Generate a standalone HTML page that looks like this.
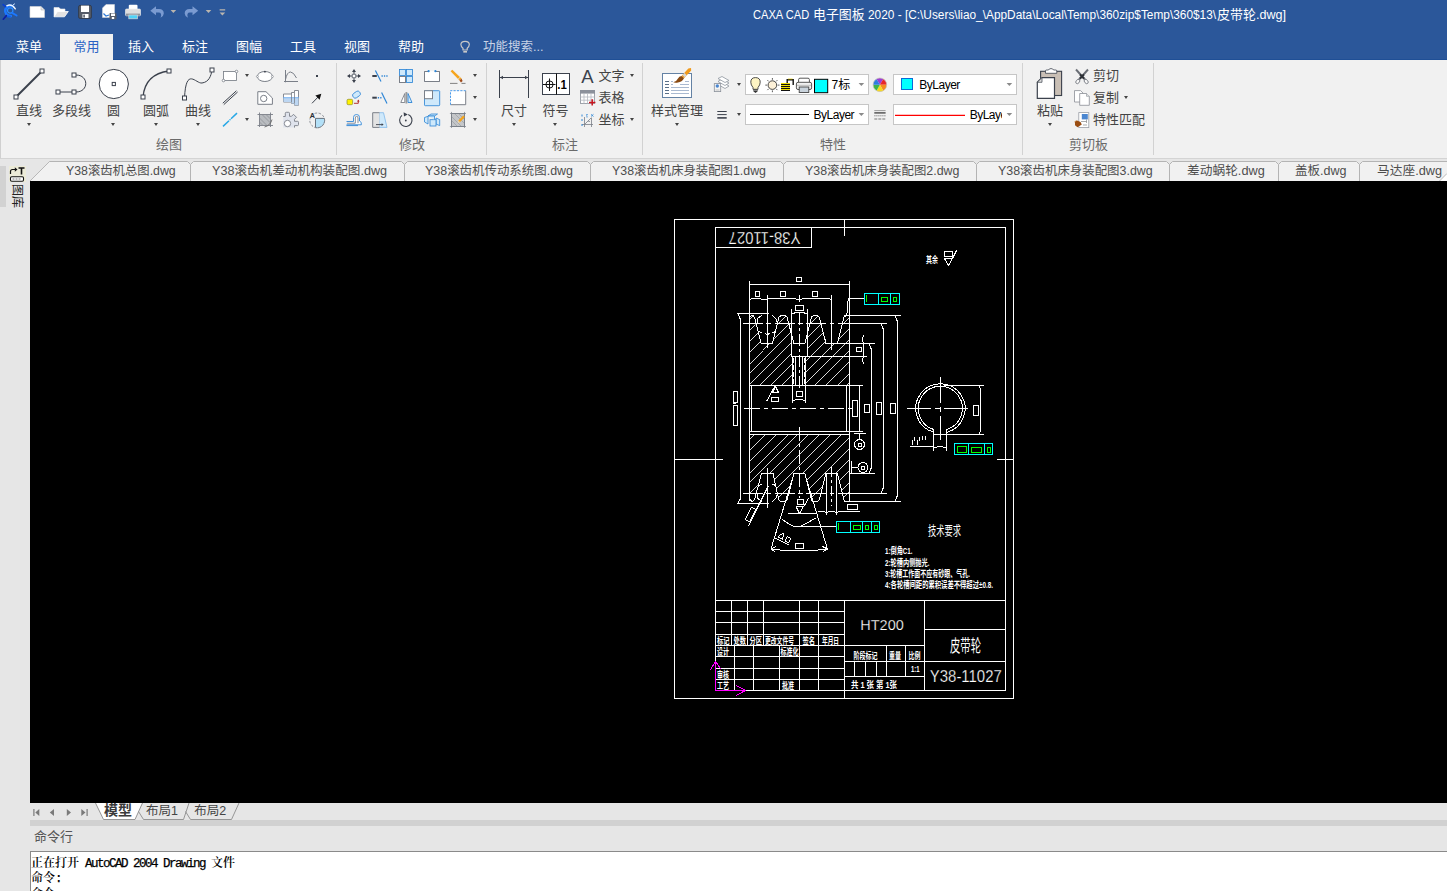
<!DOCTYPE html><html lang="zh"><head><meta charset="utf-8"><title>CAXA CAD</title><style>
*{margin:0;padding:0;box-sizing:border-box}
html,body{width:1447px;height:891px;overflow:hidden;background:#e6e6e6}
body{font-family:"Liberation Sans","Noto Sans CJK SC",sans-serif;font-size:13px;color:#444;position:relative}
.abs{position:absolute}
.fit{position:absolute;display:inline-block;white-space:nowrap;transform-origin:0 50%}
#title{left:0;top:0;width:1447px;height:60px;background:#2b579a;border-bottom:1px solid #1f4f96}
.mt{position:absolute;top:34px;height:26px;line-height:25px;color:#fff;font-size:13px;text-align:center;white-space:nowrap}
.mt.act{background:#f1f1f1;color:#2b63c4}
#ribbon{left:0;top:60px;width:1447px;height:99px;background:#f1f1f1;border-bottom:1px solid #d4d4d4;border-left:1px solid #d0d0d0}
.lbl{position:absolute;font-size:13px;line-height:14px;color:#444;white-space:nowrap;transform:translateX(-50%)}
.glbl{position:absolute;top:138px;font-size:13px;line-height:14px;color:#6a6a6a;white-space:nowrap;transform:translateX(-50%)}
.sep{position:absolute;top:63px;width:1px;height:92px;background:#d2d2d2}
.dd{position:absolute;width:0;height:0;border-left:2.5px solid transparent;border-right:2.5px solid transparent;border-top:3px solid #444;margin-left:0.5px}
.combo{position:absolute;height:21px;background:#fff;border:1px solid #c6c6c6}
.stxt{position:absolute;font-size:13px;line-height:14px;color:#444;white-space:nowrap}
.ctxt{position:absolute;font-size:12px;line-height:14px;color:#000;white-space:nowrap}
#canvas{left:30px;top:181px;width:1417px;height:622px;background:#000}
.dtab{position:absolute;top:164px;font-size:12px;line-height:14px;color:#444;white-space:nowrap}
#cmdlabel{left:34px;top:830px;font-size:13px;line-height:14px;color:#555}
#cmdbox{left:30px;top:851px;width:1417px;height:40px;background:#fff;border-top:1px solid #8a8a8a;border-left:1px solid #8a8a8a}
.cmdt{position:absolute;left:0px;font-family:"Liberation Serif","Noto Serif CJK SC",serif;font-size:12px;line-height:13px;color:#000;white-space:pre;font-weight:600}
.mono{font-family:"Liberation Mono",monospace;font-size:12.5px;letter-spacing:-1.5px;font-weight:normal;-webkit-text-stroke:0.25px #000}
.btab{position:absolute;top:804px;font-size:12.5px;line-height:14px;color:#444;white-space:nowrap}
svg{position:absolute;overflow:visible}
</style></head><body>
<div id="title" class="abs"></div>
<span id="tt1" class="fit" style="left:752.7px;transform:scaleX(0.9261);top:7px;color:#fff;font-size:12px;line-height:16px">CAXA CAD</span>
<span id="tt2" class="fit" style="left:813.3px;transform:scaleX(0.9939);top:6.5px;color:#fff;font-size:13px;line-height:16px">电子图板</span>
<span id="tt3" class="fit" style="left:867.9px;transform:scaleX(0.9883);top:7px;color:#fff;font-size:12px;line-height:16px">2020 - [C:\Users\liao_\AppData\Local\Temp\360zip$Temp\360$13\</span>
<span id="tt4" class="fit" style="left:1216.6px;transform:scaleX(0.9996);top:6.5px;color:#fff;font-size:13px;line-height:16px">皮带轮</span>
<span id="tt5" class="fit" style="left:1256px;transform:scaleX(1.0492);top:7px;color:#fff;font-size:12px;line-height:16px">.dwg]</span>
<div class="mt" style="left:2px;width:54px">菜单</div>
<div class="mt act" style="left:60px;width:53px">常用</div>
<div class="mt" style="left:114px;width:54px">插入</div>
<div class="mt" style="left:168px;width:54px">标注</div>
<div class="mt" style="left:222px;width:54px">图幅</div>
<div class="mt" style="left:276px;width:54px">工具</div>
<div class="mt" style="left:330px;width:54px">视图</div>
<div class="mt" style="left:384px;width:54px">帮助</div>
<div class="abs" style="left:483px;top:39px;color:#c8d3e6;font-size:12.5px;line-height:16px;white-space:nowrap">功能搜索...</div>
<div id="ribbon" class="abs"></div>
<div class="sep" style="left:336px"></div>
<div class="sep" style="left:486px"></div>
<div class="sep" style="left:642px"></div>
<div class="sep" style="left:1022px"></div>
<div class="sep" style="left:1153px"></div>
<div class="glbl" style="left:169px">绘图</div>
<div class="glbl" style="left:412px">修改</div>
<div class="glbl" style="left:565px">标注</div>
<div class="glbl" style="left:833px">特性</div>
<div class="glbl" style="left:1088.5px">剪切板</div>
<div class="lbl" style="left:29px;top:103.6px">直线</div>
<div class="lbl" style="left:71.5px;top:103.6px">多段线</div>
<div class="lbl" style="left:113.5px;top:103.6px">圆</div>
<div class="lbl" style="left:156px;top:103.6px">圆弧</div>
<div class="lbl" style="left:198px;top:103.6px">曲线</div>
<div class="lbl" style="left:514px;top:103.6px">尺寸</div>
<div class="lbl" style="left:555.5px;top:103.6px">符号</div>
<div class="lbl" style="left:677px;top:103.6px">样式管理</div>
<div class="lbl" style="left:1050px;top:103.6px">粘贴</div>
<div class="dd" style="left:26px;top:123px"></div>
<div class="dd" style="left:110.5px;top:123px"></div>
<div class="dd" style="left:153px;top:123px"></div>
<div class="dd" style="left:195px;top:123px"></div>
<div class="dd" style="left:511px;top:123px"></div>
<div class="dd" style="left:552.5px;top:123px"></div>
<div class="dd" style="left:674px;top:123px"></div>
<div class="dd" style="left:1047px;top:123px"></div>
<div class="dd" style="left:244.3px;top:73.8px"></div>
<div class="dd" style="left:244.3px;top:117.7px"></div>
<div class="dd" style="left:472.5px;top:73.5px"></div>
<div class="dd" style="left:472.5px;top:95.5px"></div>
<div class="dd" style="left:472.5px;top:117.8px"></div>
<div class="dd" style="left:629.5px;top:73.8px"></div>
<div class="dd" style="left:629.5px;top:117.5px"></div>
<div class="dd" style="left:736.5px;top:82.7px"></div>
<div class="dd" style="left:736.5px;top:112.7px"></div>
<div class="dd" style="left:1123.4px;top:95.7px"></div>
<div class="combo" style="left:745px;top:74px;width:124px"></div>
<div class="combo" style="left:893px;top:74px;width:124px"></div>
<div class="combo" style="left:745px;top:104px;width:124px"></div>
<div class="combo" style="left:893px;top:104px;width:124px"></div>
<div class="ctxt" style="left:831.5px;top:78px;font-size:12px">7标</div>
<div class="ctxt" style="left:919.3px;top:78px;letter-spacing:-0.5px">ByLayer</div>
<div class="ctxt" style="left:813.6px;top:108px;letter-spacing:-0.5px">ByLayer</div>
<div class="ctxt" style="left:969.7px;top:108px;letter-spacing:-0.5px;width:32.5px;overflow:hidden">ByLayer</div>
<div class="stxt" style="left:598.5px;top:68.5px">文字</div>
<div class="stxt" style="left:598.5px;top:90.5px">表格</div>
<div class="stxt" style="left:598.5px;top:112.5px">坐标</div>
<div class="stxt" style="left:1093px;top:68.5px">剪切</div>
<div class="stxt" style="left:1093px;top:90.5px">复制</div>
<div class="stxt" style="left:1093px;top:112.5px">特性匹配</div>
<svg width="1447" height="160" viewBox="0 0 1447 160" style="left:0;top:0"><g fill="none" stroke-linecap="round"><path d="M12.8 6.3 A5.2 5.2 0 1 0 10.8 16.1" stroke="#1c78ff" stroke-width="2.6"/><circle cx="10.2" cy="10.5" r="2.7" stroke="#2b8cff" stroke-width="1.2"/><path d="M6.8 5.8 Q11.5 3.2 15.3 8.8" stroke="#ffffff" stroke-width="1.4" opacity="0.92"/><path d="M13.2 4.8 L14.6 3.9" stroke="#dcecff" stroke-width="0.9"/><path d="M12.2 12.9 L16.6 15.5" stroke="#1c78ff" stroke-width="1.9"/><path d="M3.3 19.2 L6.4 15.6" stroke="#0a1fa8" stroke-width="1.7"/><path d="M3.1 4.6 L5.6 6.6" stroke="#0a3fd0" stroke-width="1.6"/><ellipse cx="8.9" cy="16.4" rx="2.1" ry="1" fill="#0d5fe8" stroke="none"/></g>
<path d="M30 6.5 H41 L44.5 10 V17.5 H30 Z" fill="#fff" stroke="#d8d8d8" stroke-width="0.6"/><path d="M41 6.5 V10 H44.5" fill="#e4e4e4" stroke="#bbb" stroke-width="0.6"/>
<path d="M54 16.5 V7.5 H59 L60.5 9 H65 V11.5" fill="#fff" stroke="#e8e8e8" stroke-width="0.6"/><path d="M54 16.8 L57.5 11.5 H68.3 L64.5 16.8 Z" fill="#e2e2e2" stroke="#fff" stroke-width="0.8"/>
<rect x="78.6" y="5.4" width="12.8" height="13" rx="1.5" fill="#555c69" stroke="#2f3541" stroke-width="0.8"/><rect x="81" y="5.6" width="8" height="6.4" fill="#fff"/><rect x="82.5" y="14" width="6" height="4" fill="#fff"/><rect x="83.3" y="14.6" width="1.6" height="3" fill="#555c69"/>
<path d="M102.5 8 L106 4.5 H114.5 V17.5 H102.5 Z" fill="#fff" stroke="#ddd" stroke-width="0.5"/><path d="M103.5 13.5 L106 16 L109 15" stroke="#2f7ad6" stroke-width="1.2" fill="none"/><rect x="109.5" y="13" width="7" height="6.5" rx="0.8" fill="#555c69"/><rect x="111" y="13.5" width="4" height="2.5" fill="#fff"/><rect x="111.8" y="17" width="2.4" height="2" fill="#fff"/>
<path d="M128.8 9.5 V5.8 Q128.8 4.8 129.8 4.8 H136.5 Q137.5 4.8 137.5 5.8 V9.5 Z" fill="#fff"/><rect x="125.5" y="9" width="15" height="6.8" rx="1" fill="#dfdfdf" stroke="#f4f4f4" stroke-width="0.6"/><rect x="126" y="13.6" width="14" height="2.2" fill="#8d949e"/><rect x="128.8" y="15" width="8.6" height="3.8" fill="#4fd2f7" stroke="#d8d8d8" stroke-width="0.7"/>
<path d="M150.3 10.8 L156 6.3 V9 H159 Q163.8 9 163.8 13.5 Q163.8 16 160.5 17.8 Q161.5 15.8 161 14 Q160.5 12.6 158.5 12.6 H156 V15.3 Z" fill="#7b9bd1"/>
<path d="M198.2 10.8 L192.5 6.3 V9 H189.5 Q184.7 9 184.7 13.5 Q184.7 16 188 17.8 Q187 15.8 187.5 14 Q188 12.6 190 12.6 H192.5 V15.3 Z" fill="#7b9bd1"/>
<path d="M170.6 10 H176.20000000000002 L173.4 13 Z" fill="#bab5ae"/>
<path d="M205.7 10 H211.3 L208.5 13 Z" fill="#bab5ae"/>
<path d="M219.6 9.3 H225.2 V10.5 H219.6 Z M219.6 12.5 H225.2 L222.4 15.5 Z" fill="#bab5ae"/>
<g fill="none" stroke="#c9c9c9" stroke-width="1.2"><path d="M463 48.3 Q460.9 46.6 460.9 44.6 Q460.9 41.3 465.1 41.3 Q469.3 41.3 469.3 44.6 Q469.3 46.6 467.2 48.3 V50 H463 Z"/><path d="M463.3 51.8 H467" stroke-width="1.6"/></g>
<line x1="16" y1="97" x2="42" y2="71" stroke="#3b414c" stroke-width="2"/>
<rect x="14.0" y="95.0" width="4" height="4" fill="#fff" stroke="#3b414c" stroke-width="1"/>
<rect x="40.0" y="69.0" width="4" height="4" fill="#fff" stroke="#3b414c" stroke-width="1"/>
<path d="M58 92 H74 M76 75 C89 75 89 92 76 92" fill="none" stroke="#3b414c" stroke-width="1"/>
<rect x="56.0" y="90.0" width="4" height="4" fill="#fff" stroke="#3b414c" stroke-width="1"/>
<rect x="72.0" y="90.0" width="4" height="4" fill="#fff" stroke="#3b414c" stroke-width="1"/>
<rect x="72.0" y="73.0" width="4" height="4" fill="#fff" stroke="#3b414c" stroke-width="1"/>
<circle cx="113.8" cy="84" r="14.6" fill="#fff" stroke="#3b414c" stroke-width="1"/>
<rect x="112.2" y="82.4" width="3.2" height="3.2" fill="#fff" stroke="#3b414c" stroke-width="1"/>
<path d="M143 97 Q145 74 169 71" fill="none" stroke="#3b414c" stroke-width="1.3"/>
<rect x="141.0" y="95.0" width="4" height="4" fill="#fff" stroke="#3b414c" stroke-width="1"/>
<rect x="167.0" y="69.0" width="4" height="4" fill="#fff" stroke="#3b414c" stroke-width="1"/>
<path d="M184.5 98 C186 66 196 84 202 83 C209 82 211 76 212 70" fill="none" stroke="#3b414c" stroke-width="1"/>
<rect x="182.5" y="96.0" width="4" height="4" fill="#fff" stroke="#3b414c" stroke-width="1"/>
<rect x="210.0" y="68.0" width="4" height="4" fill="#fff" stroke="#3b414c" stroke-width="1"/>
<rect x="223.5" y="71.5" width="13" height="9" fill="#fff" stroke="#7a7f88" stroke-width="0.85"/><circle cx="236.5" cy="71.5" r="1.3" fill="#fff" stroke="#7a7f88" stroke-width="0.8"/><circle cx="223.5" cy="80.5" r="1.3" fill="#fff" stroke="#7a7f88" stroke-width="0.8"/>
<ellipse cx="264.9" cy="76.5" rx="7.6" ry="5" fill="#fff" stroke="#7a7f88" stroke-width="1"/><circle cx="264.9" cy="71.7" r="0.9" fill="#3b414c"/><circle cx="257.4" cy="76.5" r="1" fill="#fff" stroke="#7a7f88" stroke-width="0.6"/><circle cx="272.4" cy="76.5" r="1" fill="#fff" stroke="#7a7f88" stroke-width="0.6"/>
<path d="M285.5 70 V82.3 M284 81.5 H298 M285.5 79.5 Q287 72 290.5 72 Q293.5 72 296.5 78" fill="none" stroke="#7a7f88" stroke-width="1"/>
<rect x="316" y="75" width="2" height="2" fill="#3b414c"/>
<path d="M222.8 103.2 L236.4 90.8 M223.8 104.6 L237.6 92" stroke="#3b414c" stroke-width="1"/>
<path d="M257.8 91.7 H266 L272.4 98 V104.3 H257.8 Z" fill="#fff" stroke="#7a7f88" stroke-width="1"/><circle cx="263.7" cy="98.5" r="3.2" fill="#fff" stroke="#7a7f88" stroke-width="1"/>
<path d="M283.5 94 H291.5 V92.5 H294.5 V90.5 H298.5 V105.3 H294.5 V103.5 H291.5 V102 H283.5 Z" fill="#fff" stroke="#7a7f88" stroke-width="0.9"/><path d="M283.5 98 H298.5 V105.3 H294.5 V103.5 H291.5 V102 H283.5 Z" fill="#bcd6f2" stroke="none"/><path d="M283 97.7 H299" stroke="#6aaaf0" stroke-width="0.9"/><path d="M291.5 94 V102 M294.5 92.5 V103.5" stroke="#7a7f88" stroke-width="0.8"/>
<path d="M312 103.3 L318.5 96.6" stroke="#3b414c" stroke-width="1"/><path d="M321.3 93.8 L319.6 99.8 L315.4 95.6 Z" fill="#111"/>
<path d="M223 126.4 L229 120.7 M231 118.8 L237 113.1" stroke="#29a8e6" stroke-width="1.5"/><circle cx="230" cy="119.7" r="0.8" fill="#29a8e6"/>
<rect x="259.5" y="114.5" width="11" height="11" fill="#b9bcc0"/><path d="M259.5 112.5 V127 M270.5 112.5 V127 M257.5 114.5 H273 M257.5 125.5 H273" stroke="#7a7f88" stroke-width="0.9"/><path d="M259.5 118 L267 125.5 M259.5 122 L263 125.5 M262 114.5 L270.5 123 M266 114.5 L270.5 119" stroke="#8a8d92" stroke-width="0.7"/><path d="M264.5 127 Q270.5 125.5 272 119.5" fill="none" stroke="#666" stroke-width="0.9"/>
<path d="M283.2 116.5 H285.3 V113.3 Q285.3 112.3 286.3 112.3 H288.5 Q289.5 112.3 289.5 113.3 V116.3 H291.5 L293.5 114.3 L296.5 117.3 L294.5 119.3 V121.3 H297.5 Q298.5 121.3 298.5 122.3 V124.6 Q298.5 125.6 297.5 125.6 H294.5 V127.6 H283.2 Z" fill="#dfe3ec"/><path d="M283.2 116.5 H285.3 V113.3 Q285.3 112.3 286.3 112.3 H288.5 Q289.5 112.3 289.5 113.3 V116.3 H291.5 L293.5 114.3 L296.5 117.3 L294.5 119.3 V121.3 H297.5 Q298.5 121.3 298.5 122.3 V124.6 Q298.5 125.6 297.5 125.6 H294.5 V127.6" fill="none" stroke="#7a7f88" stroke-width="0.9"/><circle cx="287.5" cy="123.5" r="3.2" fill="#fff" stroke="#7a7f88" stroke-width="0.9"/>
<path d="M315.5 118.4 H324.4 A7.5 7.5 0 0 1 315.5 127.7 Z" fill="#b3e0f7" stroke="none"/><path d="M315.5 127.5 V118.4 H324.3" fill="none" stroke="#5a6470" stroke-width="0.9"/><circle cx="317.2" cy="120.4" r="7.4" fill="none" stroke="#7a7f88" stroke-width="0.8" stroke-dasharray="2.6 1.4"/><path d="M324.35 118.4 A7.4 7.4 0 0 1 315.5 127.6" fill="none" stroke="#7a7f88" stroke-width="0.8"/><text x="309.8" y="117.9" font-size="7.2" font-weight="bold" fill="#2c313a" font-family='"Liberation Sans",sans-serif'>A</text>
<g fill="#3b414c" stroke="none"><path d="M354 69 L356 72 H352 Z M354 83 L356 80 H352 Z M347 76 L350 74 V78 Z M361 76 L358 74 V78 Z"/><rect x="353.5" y="71" width="1" height="10"/><rect x="349" y="75.5" width="10" height="1"/></g>
<rect x="352.3" y="74.3" width="3.4" height="3.4" fill="#fff" stroke="#7a7f88" stroke-width="1"/>
<path d="M372.3 76 H376.8" stroke="#3b414c" stroke-width="2"/><path d="M375.4 70.6 L381 81.6" stroke="#2f86d6" stroke-width="1.2"/><path d="M381.5 76 H388" stroke="#2f86d6" stroke-width="1.4" stroke-dasharray="1.3 1.1"/>
<rect x="399.5" y="69.5" width="6" height="6" fill="#cfe9fb" stroke="#2f86d6" stroke-width="0.85"/><rect x="406.5" y="69.5" width="6" height="6" fill="#cfe9fb" stroke="#2f86d6" stroke-width="0.85"/><rect x="406.5" y="76.5" width="6" height="6" fill="#cfe9fb" stroke="#2f86d6" stroke-width="0.85"/><rect x="399.5" y="76.5" width="6" height="6" fill="#fff" stroke="#7a7f88" stroke-width="1"/>
<path d="M428.5 71.5 H424.5 V81.5 H439.5 V71.5 H435.5" fill="#fff" stroke="#7a7f88" stroke-width="1"/><rect x="424.5" y="71.5" width="15" height="10" fill="#fff" stroke="none"/><path d="M428.5 71.5 H424.5 V81.5 H439.5 V71.5 H435.5" fill="none" stroke="#7a7f88" stroke-width="1"/><circle cx="428.6" cy="71.2" r="1.1" fill="#2f86d6"/><circle cx="435.4" cy="71.2" r="1.1" fill="#2f86d6"/>
<path d="M450.6 71.3 L452.3 69.7 L461.5 78.6 L459.5 80.6 Z" fill="#f6a51c"/><path d="M459.5 80.6 L461.5 78.6 L462.6 81 L461 82.4 Z" fill="#a04a1a"/><path d="M458 79.2 L460.2 77.2" stroke="#d8d8d8" stroke-width="1"/><path d="M450 83.4 H457.5 M461.5 83.4 H465.5" stroke="#666" stroke-width="0.8"/>
<rect x="347" y="99.3" width="5.6" height="5.4" rx="1.2" fill="#fff200" stroke="#8a8a30" stroke-width="0.7"/><rect x="352.5" y="92" width="8" height="5.2" rx="2.2" fill="#cfe9fb" stroke="#2f86d6" stroke-width="0.8" transform="rotate(-35 356.5 94.6)"/><path d="M354 103.3 H358.3 V101" fill="none" stroke="#b02020" stroke-width="0.9"/><path d="M358.3 99.6 L359.6 101.4 H357 Z" fill="#b02020"/>
<path d="M372.3 97.7 H376.8" stroke="#3b414c" stroke-width="2"/><path d="M377.8 97.7 H382.5" stroke="#2f86d6" stroke-width="1.4" stroke-dasharray="1.3 1.1"/><path d="M381.6 92.6 L387 103.4" stroke="#2f86d6" stroke-width="1.2"/>
<path d="M404.8 93.5 V102.5 H400.8 Z" fill="#fff" stroke="#7a7f88" stroke-width="0.9"/><rect x="405.5" y="92" width="1.8" height="11.5" fill="#9a9a9a"/><path d="M408 93.5 V102.5 H412 Z" fill="#cfe9fb" stroke="#2f86d6" stroke-width="0.9"/>
<rect x="424.5" y="90.7" width="15.2" height="15" rx="0.8" fill="#cfe9fb" stroke="#2f86d6" stroke-width="0.85"/><rect x="424.5" y="90.7" width="8" height="8" fill="#fff" stroke="#7a7f88" stroke-width="1"/>
<rect x="450.5" y="90.7" width="15.2" height="14" fill="#fff"/><path d="M465.7 90.7 V104.7 H450.5" fill="none" stroke="#7a7f88" stroke-width="1"/><path d="M450.5 104.7 V90.7 H465.7" fill="none" stroke="#4a9bea" stroke-width="1" stroke-dasharray="2.2 1.2"/>
<path d="M346.5 121.5 H353.5 V117.5 Q353.5 114.5 356.5 114.5 Q359.5 114.5 359.5 117.5 V121 Q362 122 361.3 124.8 H346.5" fill="#fff" stroke="#2f86d6" stroke-width="0.9"/><path d="M346.8 123.2 H355.3 V118 Q355.3 116.3 356.7 116.3 Q358 116.3 358 118 V123.2" fill="none" stroke="#7a7f88" stroke-width="0.9"/><path d="M346.5 125.6 H358" stroke="#2f86d6" stroke-width="0.9"/>
<path d="M379.5 112.7 H383.5 L387 127.4 H379.5 Z" fill="#cfe9fb" stroke="#7db8ea" stroke-width="0.8"/><path d="M379.5 112.7 H372.7 V127.4 H379.5" fill="#e3e3e3" stroke="#7a7f88" stroke-width="1"/><path d="M376 124.6 H382" stroke="#3b414c" stroke-width="0.9"/><path d="M383.6 124.6 L381.6 123.3 V125.9 Z" fill="#3b414c"/>
<path d="M408.3 114.6 A6.2 6.2 0 1 1 402 115.4" fill="none" stroke="#3b414c" stroke-width="1.1"/><path d="M407.8 114.6 L403.6 112.3 L404 116.6 Z" fill="#3b414c"/><circle cx="405.8" cy="120.5" r="0.9" fill="#3b414c"/>
<g fill="#cfe9fb" stroke="#2f86d6" stroke-width="0.8"><path d="M428 116 L431 114 H437.5 L434.5 116 Z"/><path d="M424.5 117.5 L428 116.3 V124 L424.5 122 Z"/><path d="M436 118 L439.7 119.6 V125.6 L436 124 Z"/><rect x="430" y="119.7" width="6" height="6.3"/><path d="M428 116 H434.5 V119.7"/></g>
<rect x="451.5" y="113.5" width="13" height="13" fill="#c4c6c9" stroke="#7a7f88" stroke-width="0.9"/><path d="M451.5 111.9 V128 M464.5 111.9 V128 M449.9 113.5 H466 M449.9 126.5 H466" stroke="#7a7f88" stroke-width="0.7"/><path d="M452 117 L461 126 M452 121 L457 126 M455 114 L464 123 M459 114 L464 119" stroke="#9a9da1" stroke-width="0.7"/><path d="M464.9 117 L463.3 115.4 L458.3 120.6 L459.9 122.2 Z" fill="#f6a51c"/><path d="M458.3 120.6 L457.6 123 L459.9 122.2 Z" fill="#f3d9a8"/>
<path d="M499.5 70 V98 M528.5 70 V98 M500 77.5 H528" stroke="#3b414c" stroke-width="1" fill="none"/><path d="M500 77.5 L503 75.7 V79.3 Z M528 77.5 L525 75.7 V79.3 Z" fill="#3b414c"/>
<rect x="542.5" y="73.5" width="27" height="21" fill="#fff" stroke="#3b414c" stroke-width="1"/><path d="M556.5 73.5 V94.5 M543 84.5 H555.5 M549.5 78.5 V91" stroke="#111" stroke-width="1"/><circle cx="549.5" cy="84.5" r="3.6" fill="none" stroke="#111" stroke-width="1"/><text x="557.3" y="89.3" font-size="12" font-weight="bold" fill="#000" font-family='"Liberation Sans",sans-serif' textLength="9.5" lengthAdjust="spacingAndGlyphs">.1</text>
<text x="581.3" y="82.7" font-size="18.5" fill="#3b414c" font-family='"Liberation Sans",sans-serif'>A</text>
<rect x="580.5" y="90.5" width="14" height="13" fill="#fff" stroke="#9ea3ab" stroke-width="1"/><rect x="580" y="90" width="15" height="3.6" fill="#8c919b"/><path d="M584 93.6 V103.5 M587.5 93.6 V103.5 M591 93.6 V103.5 M580.5 97 H594.5 M580.5 100.2 H594.5" stroke="#b5b9c0" stroke-width="0.8"/><rect x="586" y="97.5" width="10" height="8" fill="#f1f1f1" opacity="0"/><path d="M592.2 99.2 V105.6 M589 102.4 H595.4" stroke="#c8141e" stroke-width="1.5"/>
<path d="M584.5 117 V127 M582 124.5 H593 M584.5 124.5 L591.5 117.5 M588 121 L590 121.6 M591.5 118 V127" stroke="#7a7f88" stroke-width="0.8" fill="none"/><path d="M582 114.5 V116.5 M582 119 V121 M582 124 V126" stroke="#2f86d6" stroke-width="1"/><path d="M591 114.3 L593.5 116.5 M593.5 114.3 L591 116.5" stroke="#2f86d6" stroke-width="0.8"/><path d="M586 114.5 H588 M586 115.7 H587.3 M586 116.9 H588" stroke="#2f86d6" stroke-width="0.6"/>
<rect x="662.5" y="73.5" width="29" height="24" fill="#fff" stroke="#6482a4" stroke-width="1"/>
<path d="M665 81.5 H669" stroke="#5a6f88" stroke-width="1"/>
<path d="M671 81.5 H673 M685 81.5 H689" stroke="#a9b9d0" stroke-width="1"/>
<path d="M665 84.5 H669" stroke="#5a6f88" stroke-width="1"/>
<path d="M671 84.5 H673 M680 84.5 H689" stroke="#a9b9d0" stroke-width="1"/>
<path d="M665 87.5 H669" stroke="#5a6f88" stroke-width="1"/>
<path d="M671 87.5 H689" stroke="#a9b9d0" stroke-width="1"/>
<path d="M665 90.5 H669" stroke="#5a6f88" stroke-width="1"/>
<path d="M671 90.5 H689" stroke="#a9b9d0" stroke-width="1"/>
<path d="M665 93.5 H669" stroke="#5a6f88" stroke-width="1"/>
<path d="M671 93.5 H689" stroke="#a9b9d0" stroke-width="1"/>
<path d="M691 68 L688.3 68.4 L681.5 76 L684 78.3 L691.2 70.6 Z" fill="#f09a1c"/><path d="M684.5 73 L686.8 75.2 L684.8 77.3 L682.5 75.2 Z" fill="#d8d8d8"/><path d="M681.5 76 L684 78.3 Q682 82 678 82.5 Q675 83 673.3 82.3 Q677 81 678 78.5 Q679 76.2 681.5 76 Z" fill="#8a4a12"/>
<g fill="#fff" stroke="#8e959e" stroke-width="0.8"><path d="M718 84.5 L722 82 L729 86 L725 88.5 Z"/><path d="M718 81.5 L722 79 L729 83 L725 85.5 Z"/><path d="M718 78.5 L722 76.5 L729 80.5 L725 82.5 Z"/></g><rect x="714.3" y="83.6" width="6.4" height="8" fill="#f4f4f4" stroke="#8a9099" stroke-width="0.8"/><circle cx="717.3" cy="86" r="1.7" fill="#4a86d0"/><path d="M715.5 90 H719.5" stroke="#aaa" stroke-width="0.7"/>
<path d="M717.3 111.5 H726.7 M717.3 114.6 H726.7" stroke="#3b414c" stroke-width="1"/><path d="M717.3 117.9 H726.7" stroke="#3b414c" stroke-width="1.6"/>
<path d="M753 87.5 Q750.8 85 750.8 82.2 Q750.8 77.6 755.5 77.6 Q760.2 77.6 760.2 82.2 Q760.2 85 758 87.5 V89.3 H753 Z" fill="#fdf4c4" stroke="#3a3a3a" stroke-width="0.9"/><path d="M753.3 89.3 H757.7 V91.3 L755.5 93 L753.3 91.3 Z" fill="#333"/><path d="M753.3 90.3 H757.7" stroke="#ddd" stroke-width="0.6"/>
<circle cx="772.4" cy="85.1" r="4.3" fill="#fdf1d8" stroke="#333" stroke-width="0.9"/><path d="M772.4 78 V79.8 M772.4 90.4 V92.2 M765.3 85.1 H767.1 M777.7 85.1 H779.5 M767.4 80.1 L768.7 81.4 M776.1 88.8 L777.4 90.1 M767.4 90.1 L768.7 88.8 M776.1 81.4 L777.4 80.1" stroke="#333" stroke-width="0.8"/>
<g shape-rendering="crispEdges"><rect x="781" y="83" width="9" height="8" fill="#f0dc00"/><path d="M781 84.5 H790 M781 86.5 H790 M781 88.5 H790 M781 90.5 H790" stroke="#111" stroke-width="1"/></g><path d="M787.2 83 V79.7 H793.2 V85" fill="none" stroke="#111" stroke-width="1.4"/><path d="M788 79 H792.5" stroke="#e8d000" stroke-width="0.7"/>
<path d="M798.6 82.5 V79.6 Q798.6 78.2 800 78.2 H808 Q809.4 78.2 809.4 79.6 V82.5" fill="#fff" stroke="#444" stroke-width="0.9"/><rect x="796.4" y="82.3" width="15.2" height="7.2" rx="1.6" fill="#f2f2f2" stroke="#444" stroke-width="0.9"/><rect x="799.2" y="87" width="9.6" height="5.5" fill="#c9d3dc" stroke="#444" stroke-width="0.9"/><path d="M797 85.3 H811" stroke="#999" stroke-width="0.6"/>
<rect x="814.5" y="79.3" width="13.2" height="13.4" fill="#00ffff" stroke="#000" stroke-width="1"/>
<path d="M879.9 84.8 L876.50 78.91 A6.8 6.8 0 0 1 883.30 78.91 Z" fill="#9b3fd6"/>
<path d="M879.9 84.8 L883.30 78.91 A6.8 6.8 0 0 1 886.70 84.80 Z" fill="#e8262a"/>
<path d="M879.9 84.8 L886.70 84.80 A6.8 6.8 0 0 1 883.30 90.69 Z" fill="#f58a1f"/>
<path d="M879.9 84.8 L883.30 90.69 A6.8 6.8 0 0 1 876.50 90.69 Z" fill="#f7d91f"/>
<path d="M879.9 84.8 L876.50 90.69 A6.8 6.8 0 0 1 873.10 84.80 Z" fill="#3db54a"/>
<path d="M879.9 84.8 L873.10 84.80 A6.8 6.8 0 0 1 876.50 78.91 Z" fill="#2f7de1"/>
<circle cx="879.9" cy="84.8" r="6.8" fill="none" stroke="#c8c2b8" stroke-width="0.7"/>
<path d="M874.3 110.6 H885.6" stroke="#888" stroke-width="0.8"/><path d="M874.3 112.9 H885.6" stroke="#555" stroke-width="1.5"/><path d="M874.3 115.8 H885.6" stroke="#777" stroke-width="1" stroke-dasharray="1.2 0.8"/><path d="M874.3 119 H885.6" stroke="#777" stroke-width="1" stroke-dasharray="3 1"/>
<rect x="901.5" y="78.5" width="11" height="11" fill="#00ffff" stroke="#0a6ad8" stroke-width="1"/>
<path d="M750 114.5 H809" stroke="#000" stroke-width="1.2"/><path d="M895 115.4 H965" stroke="#ff0000" stroke-width="1.3"/>
<path d="M858.6 83.0 H864.1999999999999 L861.4 86.0 Z" fill="#8a8a8a"/>
<path d="M1006.6 83.0 H1012.1999999999999 L1009.4 86.0 Z" fill="#8a8a8a"/>
<path d="M858.6 113.0 H864.1999999999999 L861.4 116.0 Z" fill="#8a8a8a"/>
<path d="M1006.6 113.0 H1012.1999999999999 L1009.4 116.0 Z" fill="#8a8a8a"/>
<rect x="1040.6" y="71.3" width="21" height="24.2" fill="#c9bfb5" stroke="#3b414c" stroke-width="1.1"/><path d="M1045.5 73.3 V71 Q1045.5 70 1046.5 70 H1048.5 Q1049 68.6 1051 68.6 Q1053 68.6 1053.6 70 H1055.8 Q1056.8 70 1056.8 71 V73.3 Z" fill="#fff" stroke="#3b414c" stroke-width="0.8"/><path d="M1042 77.6 H1054.5 V98.3 H1037.3 V82.3 Z" fill="#fff" stroke="#3b414c" stroke-width="1.2"/><path d="M1042 77.6 V82.3 H1037.3 Z" fill="#dcdcdc" stroke="#3b414c" stroke-width="0.7"/>
<path d="M1076 69.5 L1086.3 81" stroke="#6a6e75" stroke-width="1.9"/><path d="M1088 69.5 L1077.7 81" stroke="#6a6e75" stroke-width="1.9"/><path d="M1080 74.5 L1084 78.5 M1084 74.5 L1080 78.5" stroke="#2c2f35" stroke-width="1.8"/><ellipse cx="1077.8" cy="81.5" rx="1.7" ry="2.4" fill="#f8f8f8" stroke="#7a7e85" stroke-width="0.9" transform="rotate(40 1077.8 81.5)"/><ellipse cx="1086.2" cy="81.5" rx="1.7" ry="2.4" fill="#f8f8f8" stroke="#7a7e85" stroke-width="0.9" transform="rotate(-40 1086.2 81.5)"/>
<path d="M1074.5 90.6 H1080.5 L1083 93 V102 H1074.5 Z" fill="#fff" stroke="#8a8e96" stroke-width="0.8"/><path d="M1079.7 93.5 H1086.5 L1089.3 96.3 V105.3 H1079.7 Z" fill="#fff" stroke="#8a8e96" stroke-width="0.8"/><path d="M1086.5 93.5 V96.3 H1089.3" fill="#e4e4e4" stroke="#8a8e96" stroke-width="0.6"/>
<rect x="1078.8" y="112.6" width="10" height="15" fill="#fff" stroke="#9a9ea6" stroke-width="0.8"/><rect x="1081.8" y="114" width="6" height="5.4" fill="#4a86d0"/><path d="M1081 121.5 H1086.5 M1086.5 119.5 V123 M1083 125 H1087" stroke="#888" stroke-width="0.7"/><path d="M1075 121.5 L1077 120.5 L1080.5 122 L1081.8 124.6 L1077.5 127.3 L1075 125.3 Z" fill="#9a4d12"/><path d="M1074.3 122 L1076.6 120.6" stroke="#c98a4a" stroke-width="0.8"/></svg>
<svg width="1447" height="30" viewBox="0 158 1447 30" style="left:0;top:158px"><path d="M30 181 L49.5 161.5 H1447 V181 Z" fill="#f1f1f1"/><path d="M30 181 L49.5 161.5 H185.5" fill="none" stroke="#b8b8b8" stroke-width="1"/><path d="M187.5 161 L190.5 164.5 L193.5 161 Z" fill="#e6e6e6" stroke="none"/><path d="M49.5 161.5 H187.5 L190.5 164.5 V181" fill="none" stroke="#b4b4b4" stroke-width="1"/><path d="M190.5 164.5 L193.5 161.5" fill="none" stroke="#b4b4b4" stroke-width="1"/><path d="M401.5 161 L404.5 164.5 L407.5 161 Z" fill="#e6e6e6" stroke="none"/><path d="M193.5 161.5 H401.5 L404.5 164.5 V181" fill="none" stroke="#b4b4b4" stroke-width="1"/><path d="M404.5 164.5 L407.5 161.5" fill="none" stroke="#b4b4b4" stroke-width="1"/><path d="M587.5 161 L590.5 164.5 L593.5 161 Z" fill="#e6e6e6" stroke="none"/><path d="M407.5 161.5 H587.5 L590.5 164.5 V181" fill="none" stroke="#b4b4b4" stroke-width="1"/><path d="M590.5 164.5 L593.5 161.5" fill="none" stroke="#b4b4b4" stroke-width="1"/><path d="M780.5 161 L783.5 164.5 L786.5 161 Z" fill="#e6e6e6" stroke="none"/><path d="M593.5 161.5 H780.5 L783.5 164.5 V181" fill="none" stroke="#b4b4b4" stroke-width="1"/><path d="M783.5 164.5 L786.5 161.5" fill="none" stroke="#b4b4b4" stroke-width="1"/><path d="M973.5 161 L976.5 164.5 L979.5 161 Z" fill="#e6e6e6" stroke="none"/><path d="M786.5 161.5 H973.5 L976.5 164.5 V181" fill="none" stroke="#b4b4b4" stroke-width="1"/><path d="M976.5 164.5 L979.5 161.5" fill="none" stroke="#b4b4b4" stroke-width="1"/><path d="M1166.5 161 L1169.5 164.5 L1172.5 161 Z" fill="#e6e6e6" stroke="none"/><path d="M979.5 161.5 H1166.5 L1169.5 164.5 V181" fill="none" stroke="#b4b4b4" stroke-width="1"/><path d="M1169.5 164.5 L1172.5 161.5" fill="none" stroke="#b4b4b4" stroke-width="1"/><path d="M1275.5 161 L1278.5 164.5 L1281.5 161 Z" fill="#e6e6e6" stroke="none"/><path d="M1172.5 161.5 H1275.5 L1278.5 164.5 V181" fill="none" stroke="#b4b4b4" stroke-width="1"/><path d="M1278.5 164.5 L1281.5 161.5" fill="none" stroke="#b4b4b4" stroke-width="1"/><path d="M1356.5 161 L1359.5 164.5 L1362.5 161 Z" fill="#e6e6e6" stroke="none"/><path d="M1281.5 161.5 H1356.5 L1359.5 164.5 V181" fill="none" stroke="#b4b4b4" stroke-width="1"/><path d="M1359.5 164.5 L1362.5 161.5" fill="none" stroke="#b4b4b4" stroke-width="1"/><path d="M1362.5 161.5 H1447" fill="none" stroke="#b4b4b4" stroke-width="1"/><path d="M1439.5 181 L1447 173.5 V181 Z" fill="#fff"/><path d="M1439.5 181 L1447 173.5" stroke="#aaa" stroke-width="0.8" fill="none"/></svg>
<span id="dt0" class="fit" style="left:66.3px;transform:scaleX(0.9869);top:163.5px;font-size:12.5px;line-height:14px;color:#4d4d4d">Y38滚齿机总图.dwg</span>
<span id="dt1" class="fit" style="left:212px;transform:scaleX(1.0077);top:163.5px;font-size:12.5px;line-height:14px;color:#4d4d4d">Y38滚齿机差动机构装配图.dwg</span>
<span id="dt2" class="fit" style="left:425px;transform:scaleX(0.9956);top:163.5px;font-size:12.5px;line-height:14px;color:#4d4d4d">Y38滚齿机传动系统图.dwg</span>
<span id="dt3" class="fit" style="left:612px;transform:scaleX(0.9897);top:163.5px;font-size:12.5px;line-height:14px;color:#4d4d4d">Y38滚齿机床身装配图1.dwg</span>
<span id="dt4" class="fit" style="left:805px;transform:scaleX(0.9922);top:163.5px;font-size:12.5px;line-height:14px;color:#4d4d4d">Y38滚齿机床身装配图2.dwg</span>
<span id="dt5" class="fit" style="left:998px;transform:scaleX(0.9942);top:163.5px;font-size:12.5px;line-height:14px;color:#4d4d4d">Y38滚齿机床身装配图3.dwg</span>
<span id="dt6" class="fit" style="left:1186.8px;transform:scaleX(1.0169);top:163.5px;font-size:12.5px;line-height:14px;color:#4d4d4d">差动蜗轮.dwg</span>
<span id="dt7" class="fit" style="left:1295px;transform:scaleX(1.0018);top:163.5px;font-size:12.5px;line-height:14px;color:#4d4d4d">盖板.dwg</span>
<span id="dt8" class="fit" style="left:1377px;transform:scaleX(1.0171);top:163.5px;font-size:12.5px;line-height:14px;color:#4d4d4d">马达座.dwg</span>
<div class="abs" style="left:0;top:166px;width:6px;height:41px;background:#d2d2d2"></div>
<div class="abs" style="left:9px;top:166px;width:17px;height:16px;background:#ecebd8"></div>
<svg width="30" height="50" viewBox="0 160 30 50" style="left:0;top:160px"><path d="M10.5 174 V171.5 Q10.5 169.5 12.5 169.5 H15" fill="none" stroke="#111" stroke-width="1.2"/><path d="M17.5 169.5 L14.8 167.3 V171.7 Z" fill="#111"/><path d="M18.5 168 H24.5 M21.5 168 V174.5" stroke="#111" stroke-width="1.6" fill="none"/><rect x="10.5" y="176.8" width="13" height="4.4" rx="1.2" fill="#fff" stroke="#111" stroke-width="1.1"/><path d="M12.5 179 H21.5" stroke="#555" stroke-width="0.8" stroke-dasharray="2 1"/></svg>
<div class="abs" style="left:10px;top:184px;width:14px;height:26px;font-size:12px;line-height:14px;color:#222;writing-mode:vertical-rl;text-orientation:sideways;white-space:nowrap;transform:none">图库</div>
<div id="canvas" class="abs"></div>
<svg width="1447" height="891" viewBox="0 0 1447 891" style="left:0;top:0" shape-rendering="crispEdges" stroke-width="1" fill="none"><rect x="674.5" y="219.5" width="339.0" height="479.0" stroke="#fff" fill="none"/>
<rect x="715.5" y="227.5" width="290.0" height="463.0" stroke="#fff" fill="none"/>
<line x1="844.5" y1="219.0" x2="844.5" y2="236.0" stroke="#fff" />
<line x1="674.0" y1="459.5" x2="723.0" y2="459.5" stroke="#fff" />
<line x1="997.0" y1="459.5" x2="1013.0" y2="459.5" stroke="#fff" />
<rect x="715.5" y="227.5" width="96.0" height="20.0" stroke="#fff" fill="none"/>
<g transform="rotate(180 764.5 237.8)">
<text x="728.5" y="243.8" font-size="16.2" fill="#fff" text-anchor="start" font-weight="normal" font-family='"Liberation Sans",sans-serif' textLength="72" lengthAdjust="spacingAndGlyphs" stroke="#000" stroke-width="0.25">Y38-11027</text>
</g>
<text x="926" y="262.5" font-size="9" fill="#fff" stroke="none" text-anchor="start" font-weight="bold" font-family='"Liberation Sans","Noto Sans CJK SC",sans-serif' textLength="12" lengthAdjust="spacingAndGlyphs" >其余</text>
<rect x="944.5" y="251.5" width="8.0" height="5.0" stroke="#fff" fill="none"/>
<path d="M944.5 258.5 L952.5 258.5 L948.5 265.5 L944.5 258.5" stroke="#fff" fill="none" />
<line x1="952.5" y1="258.5" x2="956.5" y2="250.5" stroke="#fff" />
<line x1="749.5" y1="281.0" x2="749.5" y2="501.0" stroke="#fff" />
<line x1="849.5" y1="281.0" x2="849.5" y2="501.0" stroke="#fff" />
<line x1="749.5" y1="284.5" x2="849.5" y2="284.5" stroke="#fff" />
<rect x="796.5" y="277.5" width="5.0" height="4.0" stroke="#fff" fill="none"/>
<path d="M749.5 299.5 L752.0 298.5 L760.0 298.5 L762.0 299.5 L766.0 299.5 L769.0 298.5 L795.0 298.5 L797.0 299.5 L801.0 299.5 L803.0 298.5 L829.0 298.5 L831.5 299.5" stroke="#fff" fill="none" />
<line x1="767.5" y1="295.0" x2="767.5" y2="347.5" stroke="#fff" />
<line x1="831.5" y1="295.0" x2="831.5" y2="349.5" stroke="#fff" />
<line x1="799.5" y1="295.0" x2="799.5" y2="302.0" stroke="#fff" />
<rect x="755.5" y="291.5" width="4.0" height="5.0" stroke="#fff" fill="none"/>
<rect x="780.5" y="291.5" width="5.0" height="5.0" stroke="#fff" fill="none"/>
<rect x="812.5" y="291.5" width="5.0" height="5.0" stroke="#fff" fill="none"/>
<rect x="795.5" y="305.5" width="8.0" height="5.0" stroke="#fff" fill="none"/>
<line x1="737.0" y1="313.5" x2="768.5" y2="313.5" stroke="#fff" />
<path d="M738.5 313.5 L739.5 318.5 L740.5 318.5 L740.5 499.0 L739.5 499.0 L738.5 503.5" stroke="#fff" fill="none" />
<line x1="737.0" y1="503.5" x2="768.5" y2="503.5" stroke="#fff" />
<rect x="733.5" y="391.5" width="4.0" height="11.0" stroke="#fff" fill="none"/>
<rect x="733.5" y="405.5" width="4.0" height="20.0" stroke="#fff" fill="none"/>
<line x1="733.0" y1="403.5" x2="736.0" y2="403.5" stroke="#fff" />
<line x1="843.5" y1="315.5" x2="901.0" y2="315.5" stroke="#fff" />
<line x1="843.5" y1="501.5" x2="901.0" y2="501.5" stroke="#fff" />
<path d="M895.5 315.5 L896.5 320.5 L897.5 320.5 L897.5 496.5 L896.5 496.5 L895.5 501.5" stroke="#fff" fill="none" />
<line x1="850.0" y1="323.5" x2="887.0" y2="323.5" stroke="#fff" />
<line x1="850.0" y1="493.5" x2="887.0" y2="493.5" stroke="#fff" />
<path d="M881.5 323.5 L882.5 328.5 L883.5 328.5 L883.5 488.5 L882.5 488.5 L881.5 493.5" stroke="#fff" fill="none" />
<line x1="826.0" y1="343.5" x2="875.0" y2="343.5" stroke="#fff" />
<line x1="849.5" y1="473.5" x2="875.0" y2="473.5" stroke="#fff" />
<path d="M869.5 343.5 L870.5 348.5 L871.5 348.5 L871.5 468.5 L870.5 468.5 L869.5 473.5" stroke="#fff" fill="none" />
<line x1="791.5" y1="356.5" x2="867.0" y2="356.5" stroke="#fff" />
<path d="M863.5 335.0 L862.5 340.0 L863.5 343.5 L863.5 356.5 L862.5 360.0 L863.5 364.5" stroke="#fff" fill="none" />
<rect x="856.5" y="347.5" width="5.0" height="4.0" stroke="#fff" fill="none"/>
<rect x="864.5" y="404.5" width="5.0" height="8.0" stroke="#fff" fill="none"/>
<rect x="876.5" y="402.5" width="5.0" height="12.0" stroke="#fff" fill="none"/>
<rect x="890.5" y="403.5" width="5.0" height="10.0" stroke="#fff" fill="none"/>
<line x1="743.0" y1="323.5" x2="850.0" y2="323.5" stroke="#fff" stroke-dasharray="20 3.4 4.8 3.4"/>
<line x1="743.0" y1="493.5" x2="850.0" y2="493.5" stroke="#fff" stroke-dasharray="20 3.4 4.8 3.4"/>
<path d="M749.5 319 Q750 315.5 752.4 315.5 Q754 315.5 755 319 L761.1 343.5 H772.3 L778.4 319 Q779 315.8 781 315.8 H785 Q787 315.8 787.6 319 L793.8 343.5 H804.8 L811 319 Q811.6 315.8 813.6 315.8 H817.4 Q819.2 315.8 819.8 319 L826 343.5 H837.3 L843.4 319 Q844 315.8 846 315.8 H849.5" stroke="#fff" fill="none" />
<path d="M749.5 498 Q750 501.3 752.4 501.3 Q754 501.3 755 498 L761.5 473.5 H773 L778.4 498 Q779 501.3 781 501.3 H785 Q787 501.3 787.6 498 L794 473.5 H804.8 L811 498 Q811.6 501.3 813.6 501.3 H817.4 Q819.2 501.3 819.8 498 L826 473.5 H837.3 L843.4 498 Q844 501.3 846 501.3 H849.5" stroke="#fff" fill="none" />
<path d="M761.7 315.3 L757.1 319 L757.3 323 M772.3 315 L776 319 L777.5 323.6 M759.5 331.5 L762 333 M775.5 331.5 L772.3 333 M765.5 333.3 L767.4 335 L769.5 333.3" stroke="#fff" fill="none" />
<path d="M761.7 501.5 L757.1 498 L757.3 494 M772.3 501.5 L776 498 L777.5 493.6 M759.5 485.5 L762 484 M775.5 485.5 L772.3 484" stroke="#fff" fill="none" />
<line x1="791.5" y1="308.5" x2="791.5" y2="356.5" stroke="#fff" />
<line x1="807.5" y1="308.5" x2="807.5" y2="356.5" stroke="#fff" />
<path d="M791.5 313.5 L794.0 313.5 L795.0 312.0 L804.0 312.0 L805.0 313.5 L807.5 313.5" stroke="#fff" fill="none" />
<line x1="792.5" y1="356.5" x2="792.5" y2="385.5" stroke="#fff" />
<line x1="795.5" y1="356.5" x2="795.5" y2="385.5" stroke="#fff" />
<line x1="802.5" y1="356.5" x2="802.5" y2="385.5" stroke="#fff" />
<line x1="805.5" y1="356.5" x2="805.5" y2="385.5" stroke="#fff" />
<line x1="793.5" y1="358.0" x2="793.5" y2="384.0" stroke="#fff" stroke-dasharray="5 2"/>
<line x1="804.5" y1="358.0" x2="804.5" y2="384.0" stroke="#fff" stroke-dasharray="5 2"/>
<line x1="799.5" y1="313.0" x2="799.5" y2="390.0" stroke="#fff" stroke-dasharray="12 3 3 3"/>
<line x1="799.5" y1="427.0" x2="799.5" y2="498.0" stroke="#fff" stroke-dasharray="14 3 3 3"/>
<line x1="749.5" y1="385.5" x2="863.0" y2="385.5" stroke="#fff" />
<line x1="749.5" y1="431.5" x2="863.0" y2="431.5" stroke="#fff" />
<line x1="749.5" y1="434.5" x2="849.5" y2="434.5" stroke="#fff" />
<line x1="751.5" y1="385.5" x2="751.5" y2="431.5" stroke="#fff" />
<line x1="846.5" y1="385.5" x2="846.5" y2="431.5" stroke="#fff" />
<line x1="859.5" y1="385.5" x2="859.5" y2="431.5" stroke="#fff" />
<rect x="852.5" y="400.5" width="5.0" height="16.0" stroke="#fff" fill="none"/>
<line x1="744.0" y1="408.5" x2="852.0" y2="408.5" stroke="#fff" stroke-dasharray="16 4 4 4"/>
<line x1="792.5" y1="385.5" x2="792.5" y2="403.0" stroke="#fff" />
<line x1="805.5" y1="385.5" x2="805.5" y2="403.0" stroke="#fff" />
<path d="M792.5 400.5 L794.5 400.5 L795.5 399.5 L802.5 399.5 L803.5 400.5 L805.5 400.5" stroke="#fff" fill="none" />
<rect x="796.5" y="391.5" width="6.0" height="5.0" stroke="#fff" fill="none"/>
<path d="M775.5 386.5 L772.5 392.5 L778.5 392.5 L775.5 386.5" stroke="#fff" fill="none" />
<rect x="771.5" y="397.5" width="7.0" height="4.0" stroke="#fff" fill="none"/>
<line x1="766.5" y1="401.5" x2="775.0" y2="386.0" stroke="#fff" />
<line x1="854.0" y1="433.5" x2="866.0" y2="433.5" stroke="#fff" />
<line x1="859.5" y1="433.5" x2="859.5" y2="440.0" stroke="#fff" />
<circle cx="859.5" cy="444.5" r="5" stroke="#fff" fill="none"/>
<rect x="858.5" y="443.5" width="3.0" height="3.0" stroke="#fff" fill="none"/>
<line x1="851.5" y1="461.0" x2="851.5" y2="473.0" stroke="#fff" />
<line x1="851.5" y1="467.5" x2="858.0" y2="467.5" stroke="#fff" />
<circle cx="863" cy="467.5" r="5" stroke="#fff" fill="none"/>
<rect x="861.5" y="466.5" width="3.0" height="3.0" stroke="#fff" fill="none"/>
<clipPath id="hc"><path d="M749.5 316 L753 316 L761 343.5 L773 343.5 L779.5 316 L786.5 316 L791.5 334.3 L791.5 356.5 L792.5 356.5 L792.5 385.5 L749.5 385.5 Z M807.5 332.7 L811.7 316 L818.9 316 L826 343.5 L837.3 343.5 L844.5 316 L849.5 316 L849.5 385.5 L805.5 385.5 L805.5 356.5 L807.5 356.5 Z M749.5 434.5 L849.5 434.5 L849.5 501 L844.5 501 L837.3 473.5 L826 473.5 L818.9 501 L811.7 501 L804.8 473.5 L794 473.5 L786.5 501 L779.5 501 L773 473.5 L761.5 473.5 L753 501 L749.5 501 Z"/></clipPath>
<g clip-path="url(#hc)">
<line x1="745.0" y1="313.0" x2="855.0" y2="203.0" stroke="#fff" stroke-width="0.85"/>
<line x1="745.0" y1="323.9" x2="855.0" y2="213.9" stroke="#fff" stroke-width="0.85"/>
<line x1="745.0" y1="334.8" x2="855.0" y2="224.8" stroke="#fff" stroke-width="0.85"/>
<line x1="745.0" y1="345.7" x2="855.0" y2="235.7" stroke="#fff" stroke-width="0.85"/>
<line x1="745.0" y1="356.6" x2="855.0" y2="246.6" stroke="#fff" stroke-width="0.85"/>
<line x1="745.0" y1="367.5" x2="855.0" y2="257.5" stroke="#fff" stroke-width="0.85"/>
<line x1="745.0" y1="378.4" x2="855.0" y2="268.4" stroke="#fff" stroke-width="0.85"/>
<line x1="745.0" y1="389.3" x2="855.0" y2="279.3" stroke="#fff" stroke-width="0.85"/>
<line x1="745.0" y1="400.2" x2="855.0" y2="290.2" stroke="#fff" stroke-width="0.85"/>
<line x1="745.0" y1="411.1" x2="855.0" y2="301.1" stroke="#fff" stroke-width="0.85"/>
<line x1="745.0" y1="422.0" x2="855.0" y2="312.0" stroke="#fff" stroke-width="0.85"/>
<line x1="745.0" y1="432.9" x2="855.0" y2="322.9" stroke="#fff" stroke-width="0.85"/>
<line x1="745.0" y1="443.8" x2="855.0" y2="333.8" stroke="#fff" stroke-width="0.85"/>
<line x1="745.0" y1="454.7" x2="855.0" y2="344.7" stroke="#fff" stroke-width="0.85"/>
<line x1="745.0" y1="465.6" x2="855.0" y2="355.6" stroke="#fff" stroke-width="0.85"/>
<line x1="745.0" y1="476.5" x2="855.0" y2="366.5" stroke="#fff" stroke-width="0.85"/>
<line x1="745.0" y1="487.4" x2="855.0" y2="377.4" stroke="#fff" stroke-width="0.85"/>
<line x1="745.0" y1="498.3" x2="855.0" y2="388.3" stroke="#fff" stroke-width="0.85"/>
<line x1="745.0" y1="509.2" x2="855.0" y2="399.2" stroke="#fff" stroke-width="0.85"/>
<line x1="745.0" y1="520.1" x2="855.0" y2="410.1" stroke="#fff" stroke-width="0.85"/>
<line x1="745.0" y1="531.0" x2="855.0" y2="421.0" stroke="#fff" stroke-width="0.85"/>
<line x1="745.0" y1="541.9" x2="855.0" y2="431.9" stroke="#fff" stroke-width="0.85"/>
<line x1="745.0" y1="552.8" x2="855.0" y2="442.8" stroke="#fff" stroke-width="0.85"/>
<line x1="745.0" y1="563.7" x2="855.0" y2="453.7" stroke="#fff" stroke-width="0.85"/>
<line x1="745.0" y1="574.6" x2="855.0" y2="464.6" stroke="#fff" stroke-width="0.85"/>
<line x1="745.0" y1="585.5" x2="855.0" y2="475.5" stroke="#fff" stroke-width="0.85"/>
<line x1="745.0" y1="596.4" x2="855.0" y2="486.4" stroke="#fff" stroke-width="0.85"/>
<line x1="745.0" y1="607.3" x2="855.0" y2="497.3" stroke="#fff" stroke-width="0.85"/>
</g>
<line x1="767.5" y1="468.0" x2="767.5" y2="507.5" stroke="#fff" />
<line x1="831.5" y1="467.0" x2="831.5" y2="506.0" stroke="#fff" stroke-dasharray="10 3 3 3"/>
<line x1="826.5" y1="473.5" x2="826.5" y2="514.5" stroke="#fff" />
<line x1="836.5" y1="473.5" x2="836.5" y2="514.5" stroke="#fff" />
<path d="M818.0 511.5 L824.0 511.5 L826.5 513.0 L829.0 511.5 L834.0 511.5 L836.5 513.0 L839.0 511.5 L860.0 511.5" stroke="#fff" fill="none" />
<rect x="847.5" y="504.5" width="10.0" height="5.0" stroke="#fff" fill="none"/>
<line x1="794.0" y1="473.5" x2="771.0" y2="549.0" stroke="#fff" />
<line x1="804.8" y1="473.5" x2="827.4" y2="549.0" stroke="#fff" />
<path d="M771 549 A200 200 0 0 0 827.4 549" stroke="#fff" fill="none" />
<path d="M771 549 L776 546.5 M771 549 L775 551.5 M827.4 549 L822.5 546.5 M827.4 549 L823 551.5" stroke="#fff" fill="none" />
<rect x="795.5" y="543.5" width="8.0" height="5.0" stroke="#fff" fill="none"/>
<line x1="788.0" y1="513.5" x2="815.5" y2="513.5" stroke="#fff" />
<path d="M796.0 506.5 L803.5 506.5 L799.5 513.5 L796.0 506.5" stroke="#fff" fill="none" />
<rect x="797.5" y="499.5" width="6.0" height="5.0" stroke="#fff" fill="none"/>
<line x1="803.8" y1="506.6" x2="809.0" y2="497.7" stroke="#fff" />
<path d="M781.7 519 Q788 524 794.3 526.5 L836 526.5 M800.5 526.5 L816.3 517.8" stroke="#fff" fill="none" />
<line x1="768.3" y1="485.9" x2="748.4" y2="525.9" stroke="#fff" />
<g transform="rotate(-62 750.5 514.5)"><rect x="743.5" y="512" width="14" height="5" stroke="#fff" fill="none"/></g>
<g transform="rotate(28 785 538)">
<path d="M778.0 540.5 L781.0 534.5 L784.0 540.5 L778.0 540.5" stroke="#fff" fill="none" />
<rect x="786.5" y="535.5" width="4" height="5" stroke="#fff" fill="none"/>
<line x1="775.0" y1="542.5" x2="792.0" y2="542.5" stroke="#fff" />
</g>
<rect x="864.5" y="293.5" width="35.0" height="11.0" stroke="#00ffff" fill="none"/>
<line x1="878.5" y1="293.0" x2="878.5" y2="304.0" stroke="#00ffff" />
<line x1="890.5" y1="293.0" x2="890.5" y2="304.0" stroke="#00ffff" />
<rect x="881.5" y="297.5" width="6.0" height="4.0" stroke="#00ff00" fill="none"/>
<rect x="893.5" y="297.5" width="3.0" height="4.0" stroke="#00ff00" fill="none"/>
<line x1="866.5" y1="295.0" x2="866.5" y2="302.0" stroke="#00ff00" />
<path d="M864.0 298.5 L848.5 298.5 L847.5 303.0 L847.5 310.0 L846.5 315.5" stroke="#fff" fill="none" />
<rect x="836.5" y="521.5" width="43.0" height="11.0" stroke="#00ffff" fill="none"/>
<line x1="850.5" y1="521.0" x2="850.5" y2="532.0" stroke="#00ffff" />
<line x1="862.5" y1="521.0" x2="862.5" y2="532.0" stroke="#00ffff" />
<line x1="871.5" y1="521.0" x2="871.5" y2="532.0" stroke="#00ffff" />
<rect x="853.5" y="525.5" width="7.0" height="4.0" stroke="#00ff00" fill="none"/>
<rect x="865.5" y="525.5" width="3.0" height="4.0" stroke="#00ff00" fill="none"/>
<rect x="874.5" y="525.5" width="3.0" height="4.0" stroke="#00ff00" fill="none"/>
<line x1="838.5" y1="523.0" x2="838.5" y2="530.0" stroke="#00ff00" />
<rect x="954.5" y="443.5" width="38.0" height="11.0" stroke="#00ffff" fill="none"/>
<line x1="968.5" y1="443.0" x2="968.5" y2="454.0" stroke="#00ffff" />
<line x1="984.5" y1="443.0" x2="984.5" y2="454.0" stroke="#00ffff" />
<rect x="957.5" y="446.5" width="9.0" height="6.0" stroke="#00ff00" fill="none"/>
<rect x="971.5" y="447.5" width="10.0" height="5.0" stroke="#00ff00" fill="none"/>
<rect x="987.5" y="447.5" width="3.0" height="5.0" stroke="#00ff00" fill="none"/>
<path d="M933.5 432.2 A24.7 24.7 0 1 1 946.6 432.4" stroke="#fff" fill="none" />
<path d="M934 429.6 A22.1 22.1 0 1 1 946.6 429.6" stroke="#fff" fill="none" />
<line x1="933.5" y1="429.0" x2="933.5" y2="451.0" stroke="#fff" />
<line x1="946.5" y1="429.0" x2="946.5" y2="451.0" stroke="#fff" />
<path d="M933.5 447.5 L936.5 447.5 L937.5 446.5 L942.5 446.5 L943.5 447.5 L946.5 447.5" stroke="#fff" fill="none" />
<line x1="933.5" y1="434.5" x2="984.0" y2="434.5" stroke="#fff" />
<line x1="944.0" y1="385.5" x2="984.0" y2="385.5" stroke="#fff" />
<path d="M979.5 385.5 L980.5 390.0 L980.5 430.0 L979.5 434.5" stroke="#fff" fill="none" />
<rect x="973.5" y="405.5" width="5.0" height="10.0" stroke="#fff" fill="none"/>
<line x1="907.0" y1="408.5" x2="969.0" y2="408.5" stroke="#fff" stroke-dasharray="24 4 5 4"/>
<line x1="940.5" y1="377.0" x2="940.5" y2="440.0" stroke="#fff" stroke-dasharray="26 4 5 4"/>
<line x1="910.0" y1="446.5" x2="933.5" y2="446.5" stroke="#fff" />
<path d="M912.5 440 V445 M914.5 437 V441 M917.5 440 V445 M919.5 437 V441 M922.5 436 V440 M925.5 436 V440" stroke="#fff" fill="none" />
<line x1="715.0" y1="600.5" x2="1005.0" y2="600.5" stroke="#fff" />
<line x1="715.0" y1="611.5" x2="844.5" y2="611.5" stroke="#fff" />
<line x1="715.0" y1="622.5" x2="844.5" y2="622.5" stroke="#fff" />
<line x1="715.0" y1="634.5" x2="844.5" y2="634.5" stroke="#fff" />
<line x1="715.0" y1="645.5" x2="844.5" y2="645.5" stroke="#fff" />
<line x1="715.0" y1="656.5" x2="844.5" y2="656.5" stroke="#fff" />
<line x1="715.0" y1="668.5" x2="844.5" y2="668.5" stroke="#fff" />
<line x1="715.0" y1="679.5" x2="844.5" y2="679.5" stroke="#fff" />
<line x1="731.5" y1="600.5" x2="731.5" y2="645.5" stroke="#fff" />
<line x1="747.5" y1="600.5" x2="747.5" y2="645.5" stroke="#fff" />
<line x1="763.5" y1="600.5" x2="763.5" y2="645.5" stroke="#fff" />
<line x1="799.5" y1="600.5" x2="799.5" y2="690.5" stroke="#fff" />
<line x1="818.5" y1="600.5" x2="818.5" y2="690.5" stroke="#fff" />
<line x1="734.5" y1="645.5" x2="734.5" y2="690.5" stroke="#fff" />
<line x1="753.5" y1="645.5" x2="753.5" y2="690.5" stroke="#fff" />
<line x1="779.5" y1="645.5" x2="779.5" y2="690.5" stroke="#fff" />
<line x1="844.5" y1="600.5" x2="844.5" y2="698.5" stroke="#fff" />
<line x1="924.5" y1="600.5" x2="924.5" y2="690.5" stroke="#fff" />
<line x1="924.5" y1="629.5" x2="1005.0" y2="629.5" stroke="#fff" />
<line x1="844.5" y1="645.5" x2="924.5" y2="645.5" stroke="#fff" />
<line x1="844.5" y1="661.5" x2="1005.0" y2="661.5" stroke="#fff" />
<line x1="844.5" y1="676.5" x2="924.5" y2="676.5" stroke="#fff" />
<line x1="886.5" y1="645.5" x2="886.5" y2="676.5" stroke="#fff" />
<line x1="905.5" y1="645.5" x2="905.5" y2="676.5" stroke="#fff" />
<line x1="854.5" y1="661.5" x2="854.5" y2="676.5" stroke="#fff" />
<line x1="865.5" y1="661.5" x2="865.5" y2="676.5" stroke="#fff" />
<line x1="876.5" y1="661.5" x2="876.5" y2="676.5" stroke="#fff" />
<text x="717" y="643.5" font-size="9" fill="#fff" stroke="none" text-anchor="start" font-weight="bold" font-family='"Liberation Sans","Noto Sans CJK SC",sans-serif' textLength="12.5" lengthAdjust="spacingAndGlyphs" >标记</text>
<text x="733.5" y="643.5" font-size="9" fill="#fff" stroke="none" text-anchor="start" font-weight="bold" font-family='"Liberation Sans","Noto Sans CJK SC",sans-serif' textLength="12.5" lengthAdjust="spacingAndGlyphs" >处数</text>
<text x="749.5" y="643.5" font-size="9" fill="#fff" stroke="none" text-anchor="start" font-weight="bold" font-family='"Liberation Sans","Noto Sans CJK SC",sans-serif' textLength="12.5" lengthAdjust="spacingAndGlyphs" >分区</text>
<text x="765" y="643.5" font-size="9" fill="#fff" stroke="none" text-anchor="start" font-weight="bold" font-family='"Liberation Sans","Noto Sans CJK SC",sans-serif' textLength="29" lengthAdjust="spacingAndGlyphs" >更改文件号</text>
<text x="802.5" y="643.5" font-size="9" fill="#fff" stroke="none" text-anchor="start" font-weight="bold" font-family='"Liberation Sans","Noto Sans CJK SC",sans-serif' textLength="12.5" lengthAdjust="spacingAndGlyphs" >签名</text>
<text x="822" y="643.5" font-size="9" fill="#fff" stroke="none" text-anchor="start" font-weight="bold" font-family='"Liberation Sans","Noto Sans CJK SC",sans-serif' textLength="17" lengthAdjust="spacingAndGlyphs" >年月日</text>
<text x="717" y="654.5" font-size="9" fill="#fff" stroke="none" text-anchor="start" font-weight="bold" font-family='"Liberation Sans","Noto Sans CJK SC",sans-serif' textLength="12" lengthAdjust="spacingAndGlyphs" >设计</text>
<text x="780.5" y="654.5" font-size="9" fill="#fff" stroke="none" text-anchor="start" font-weight="bold" font-family='"Liberation Sans","Noto Sans CJK SC",sans-serif' textLength="18" lengthAdjust="spacingAndGlyphs" >标准化</text>
<text x="717" y="677.5" font-size="9" fill="#fff" stroke="none" text-anchor="start" font-weight="bold" font-family='"Liberation Sans","Noto Sans CJK SC",sans-serif' textLength="12" lengthAdjust="spacingAndGlyphs" >审核</text>
<text x="717" y="688.5" font-size="9" fill="#fff" stroke="none" text-anchor="start" font-weight="bold" font-family='"Liberation Sans","Noto Sans CJK SC",sans-serif' textLength="12" lengthAdjust="spacingAndGlyphs" >工艺</text>
<text x="782" y="688.5" font-size="9" fill="#fff" stroke="none" text-anchor="start" font-weight="bold" font-family='"Liberation Sans","Noto Sans CJK SC",sans-serif' textLength="12" lengthAdjust="spacingAndGlyphs" >批准</text>
<text x="853.5" y="658.5" font-size="9" fill="#fff" stroke="none" text-anchor="start" font-weight="bold" font-family='"Liberation Sans","Noto Sans CJK SC",sans-serif' textLength="24" lengthAdjust="spacingAndGlyphs" >阶段标记</text>
<text x="889" y="658.5" font-size="9" fill="#fff" stroke="none" text-anchor="start" font-weight="bold" font-family='"Liberation Sans","Noto Sans CJK SC",sans-serif' textLength="12" lengthAdjust="spacingAndGlyphs" >重量</text>
<text x="908.5" y="658.5" font-size="9" fill="#fff" stroke="none" text-anchor="start" font-weight="bold" font-family='"Liberation Sans","Noto Sans CJK SC",sans-serif' textLength="12" lengthAdjust="spacingAndGlyphs" >比例</text>
<text x="911" y="672" font-size="8.5" fill="#fff" stroke="none" text-anchor="start" font-weight="bold" font-family='"Liberation Sans","Noto Sans CJK SC",sans-serif' textLength="8.5" lengthAdjust="spacingAndGlyphs" >1:1</text>
<text x="851" y="688" font-size="9" fill="#fff" stroke="none" text-anchor="start" font-weight="bold" font-family='"Liberation Sans","Noto Sans CJK SC",sans-serif' textLength="46" lengthAdjust="spacingAndGlyphs" >共 1 张 第 1张</text>
<text x="860.3" y="630" font-size="14.5" fill="#fff" text-anchor="start" font-weight="normal" font-family='"Liberation Sans",sans-serif' textLength="43.5" lengthAdjust="spacingAndGlyphs" stroke="#000" stroke-width="0.25">HT200</text>
<text x="950" y="651.5" font-size="16.5" fill="#fff" stroke="none" text-anchor="start" font-weight="normal" font-family='"Liberation Sans","Noto Sans CJK SC",sans-serif' textLength="31" lengthAdjust="spacingAndGlyphs" >皮带轮</text>
<text x="929.8" y="682.3" font-size="16.5" fill="#fff" text-anchor="start" font-weight="normal" font-family='"Liberation Sans",sans-serif' textLength="72" lengthAdjust="spacingAndGlyphs" stroke="#000" stroke-width="0.25">Y38-11027</text>
<text x="928" y="535" font-size="13" fill="#fff" stroke="none" text-anchor="start" font-weight="normal" font-family='"Liberation Sans","Noto Sans CJK SC",sans-serif' textLength="33" lengthAdjust="spacingAndGlyphs" >技术要求</text>
<text x="885" y="554.2" font-size="9.6" fill="#fff" stroke="none" text-anchor="start" font-weight="bold" font-family='"Liberation Sans","Noto Sans CJK SC",sans-serif' textLength="27.5" lengthAdjust="spacingAndGlyphs" >1:倒角C1.</text>
<text x="885" y="565.6" font-size="9.6" fill="#fff" stroke="none" text-anchor="start" font-weight="bold" font-family='"Liberation Sans","Noto Sans CJK SC",sans-serif' textLength="44.5" lengthAdjust="spacingAndGlyphs" >2:轮槽内侧抛光.</text>
<text x="885" y="576.9" font-size="9.6" fill="#fff" stroke="none" text-anchor="start" font-weight="bold" font-family='"Liberation Sans","Noto Sans CJK SC",sans-serif' textLength="85" lengthAdjust="spacingAndGlyphs" >3:轮槽工作面不应有砂眼、气孔.</text>
<text x="885" y="588.2" font-size="9.6" fill="#fff" stroke="none" text-anchor="start" font-weight="bold" font-family='"Liberation Sans","Noto Sans CJK SC",sans-serif' textLength="108" lengthAdjust="spacingAndGlyphs" >4:各轮槽间距的累积误差不得超过±0.8.</text>
<path d="M715.5 661 V690.5 H745.5 M715.5 661 L710.5 670 M715.5 661 L720.5 669 M745.5 690.5 L736 685.5 M745.5 690.5 L736 695.5" stroke="#ff00ff" fill="none" /></svg>
<div class="abs" style="left:30px;top:820px;width:1417px;height:6px;background:#d1d1d1"></div>
<svg width="260" height="18" viewBox="30 803 260 18" style="left:30px;top:803px"><path d="M95.5 803 L103.5 819.5 H135 L142 803 Z" fill="#fff"/><path d="M95.5 803 L103.5 819.5 H135 L142.5 803 M138.5 811.5 L143.5 819.5 H183.5 L189 803 M185.5 811.5 L190.5 819.5 H231.5 L239 803" fill="none" stroke="#8c8c8c" stroke-width="0.9"/><g fill="#7a7a7a"><rect x="33.3" y="809" width="1.2" height="7"/><path d="M39.3 809 V816 L35.3 812.5 Z"/><path d="M54 809 V816 L49.8 812.5 Z"/><path d="M66.8 809 V816 L71 812.5 Z"/><path d="M81.3 809 V816 L85.5 812.5 Z"/><rect x="86.5" y="809" width="1.2" height="7"/></g></svg>
<div class="btab" style="left:104px;top:803px;font-weight:bold;font-size:14px;color:#3a3a3a">模型</div>
<div class="btab" style="left:146px;top:803.5px">布局1</div>
<div class="btab" style="left:194.3px;top:803.5px">布局2</div>
<div id="cmdlabel" class="abs">命令行</div>
<div id="cmdbox" class="abs"><div class="cmdt" style="top:4.5px">正在打开<span class="mono"> AutoCAD 2004 Drawing </span>文件</div><div class="cmdt" style="top:20px">命令<span class="mono">:</span></div><div class="cmdt" style="top:35.5px">命令<span class="mono">:</span></div></div>
</body></html>
